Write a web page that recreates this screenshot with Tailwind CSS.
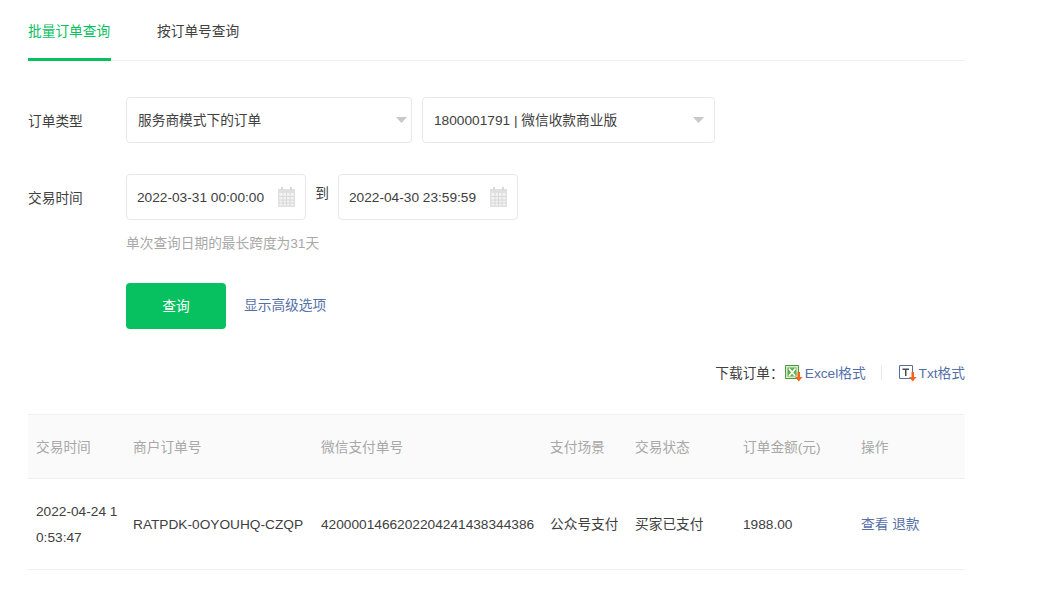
<!DOCTYPE html>
<html lang="zh-CN">
<head>
  <meta charset="UTF-8" />
  <title>交易订单</title>
  <script src="https://cdn.jsdelivr.net/npm/@tailwindcss/browser@4"></script>
</head>
<body class="bg-white text-[#404040] text-[13.7px] font-['Liberation_Sans','Noto_Sans_CJK_SC',sans-serif]">
  <div class="w-[937px] ml-[28px]">
    <!-- tabs -->
    <div class="flex h-[61px] border-b border-[#f0f0f0] gap-[46px]">
      <div class="w-[83px] h-[61px] pt-[21px] leading-[22px] whitespace-nowrap text-[#07c160] border-b-[3px] border-[#07c160]">批量订单查询</div>
      <div class="pt-[21px] leading-[22px]">按订单号查询</div>
    </div>

    <!-- order type -->
    <div class="flex items-center mt-[36px]">
      <div class="w-[98px] pt-[4px]">订单类型</div>
      <div class="flex gap-[10px]">
        <div class="w-[286px] h-[46px] border border-[#e8e8e8] rounded-[4px] flex items-center justify-between pl-[11px] pr-[3px]">
          <span class="pt-[2px]">服务商模式下的订单</span>
          <svg width="13" height="8" viewBox="0 0 13 8"><path d="M1 1h11L6.500 7z" fill="#c8c8c8"/></svg>
        </div>
        <div class="w-[293px] h-[46px] border border-[#e8e8e8] rounded-[4px] flex items-center justify-between pl-[11px] pr-[9px]">
          <span class="pt-[2px]">1800001791 | 微信收款商业版</span>
          <svg width="13" height="8" viewBox="0 0 13 8"><path d="M1 1h11L6.500 7z" fill="#c8c8c8"/></svg>
        </div>
      </div>
    </div>

    <!-- time -->
    <div class="flex items-center mt-[31px]">
      <div class="w-[98px] pt-[4px]">交易时间</div>
      <div class="flex items-center">
        <div class="w-[180px] h-[46px] border border-[#e8e8e8] rounded-[4px] flex items-center justify-between pl-[10px] pr-[10px]">
          <span class="pt-[2px]">2022-03-31 00:00:00</span>
          <svg width="17" height="20" viewBox="0 0 17 20"><path d="M0 2h17v18H0z" fill="#e0e0e0"/><path d="M3 0h2v3H3zM12 0h2v3h-2z" fill="#d8d8d8"/><path d="M1.500 6h14v12.500h-14z" fill="#f3f3f3"/><path d="M1 9.500h15M1 13h15M1 16h15M5 6v13M8.500 6v13M12 6v13" stroke="#d8d8d8" fill="none"/></svg>
        </div>
        <span class="w-[32px] text-center -mt-[5px]">到</span>
        <div class="w-[180px] h-[46px] border border-[#e8e8e8] rounded-[4px] flex items-center justify-between pl-[10px] pr-[10px]">
          <span class="pt-[2px]">2022-04-30 23:59:59</span>
          <svg width="17" height="20" viewBox="0 0 17 20"><path d="M0 2h17v18H0z" fill="#e0e0e0"/><path d="M3 0h2v3H3zM12 0h2v3h-2z" fill="#d8d8d8"/><path d="M1.500 6h14v12.500h-14z" fill="#f3f3f3"/><path d="M1 9.500h15M1 13h15M1 16h15M5 6v13M8.500 6v13M12 6v13" stroke="#d8d8d8" fill="none"/></svg>
        </div>
      </div>
    </div>
    <div class="ml-[98px] mt-[13px] leading-[22px] text-[#a8a8a8]">单次查询日期的最长跨度为31天</div>

    <!-- actions -->
    <div class="flex items-start ml-[98px] mt-[28px]">
      <button class="w-[100px] h-[46px] pt-[3px] rounded-[4px] bg-[#07c160] text-white">查询</button>
      <a class="ml-[18px] mt-[12px] leading-[22px] text-[#5470a8]">显示高级选项</a>
    </div>

    <!-- download -->
    <div class="flex items-center justify-end h-[22px] mt-[33px]">
      <span class="pt-[2px]">下载订单：</span>
      <svg class="mr-[2px] ml-[1px]" width="18" height="17" viewBox="0 0 18 17">
        <path d="M.5.500h13v13H.5z" fill="#d8ecd0" stroke="#4c9a3a"/>
        <path d="M2.500 2.500h9v9h-9z" fill="#5fae4a"/>
        <path d="M4 3.500l6 7.500M10.500 3.500L4 11" stroke="#fff" stroke-width="1.800"/>
        <path d="M12.500 7h2.500v5h2.500l-3.750 4.500L10 12h2.500z" fill="#f0641e"/>
      </svg>
      <a class="pt-[2px] text-[#5470a8]">Excel格式</a>
      <span class="w-px h-[14px] bg-[#e8e8e8] mx-[15px]"></span>
      <svg class="mr-[2px] ml-[2px]" width="18" height="17" viewBox="0 0 18 17">
        <path d="M.5.500h13v13H.5z" fill="#fff" stroke="#5470a8"/>
        <path d="M3.500 3.500h6.500v1.500H7.500v6H6V5H3.500z" fill="#4a4a4a"/>
        <path d="M12.500 7h2.500v5h2.500l-3.750 4.500L10 12h2.500z" fill="#f0641e"/>
      </svg>
      <a class="pt-[2px] text-[#5470a8]">Txt格式</a>
    </div>

    <!-- result table -->
    <table class="w-full table-fixed border-collapse mt-[30px]">
      <colgroup>
        <col class="w-[97px]" /><col class="w-[188px]" /><col class="w-[229px]" /><col class="w-[85px]" /><col class="w-[108px]" /><col class="w-[118px]" /><col class="w-[112px]" />
      </colgroup>
      <thead>
        <tr class="h-[64px] bg-[#fafafa] border-y border-[#f0f0f0] text-[#a8a8a8] text-left">
          <th class="px-[8px] pt-[3px] font-normal">交易时间</th>
          <th class="px-[8px] pt-[3px] font-normal">商户订单号</th>
          <th class="px-[8px] pt-[3px] font-normal">微信支付单号</th>
          <th class="px-[8px] pt-[3px] font-normal">支付场景</th>
          <th class="px-[8px] pt-[3px] font-normal">交易状态</th>
          <th class="px-[8px] pt-[3px] font-normal">订单金额(元)</th>
          <th class="px-[8px] pt-[3px] font-normal">操作</th>
        </tr>
      </thead>
      <tbody>
        <tr class="h-[91px] border-b border-[#f0f0f0]">
          <td class="px-[8px] pt-[2px] whitespace-nowrap leading-[26px]">2022-04-24 1<br />0:53:47</td>
          <td class="px-[8px] pt-[3px] whitespace-nowrap">RATPDK-0OYOUHQ-CZQP</td>
          <td class="px-[8px] pt-[3px] whitespace-nowrap">4200001466202204241438344386</td>
          <td class="px-[8px] pt-[3px] whitespace-nowrap">公众号支付</td>
          <td class="px-[8px] pt-[3px] whitespace-nowrap">买家已支付</td>
          <td class="px-[8px] pt-[3px]">1988.00</td>
          <td class="px-[8px] pt-[3px] text-[#5470a8]">查看 退款</td>
        </tr>
      </tbody>
    </table>
  </div>
</body>
</html>
